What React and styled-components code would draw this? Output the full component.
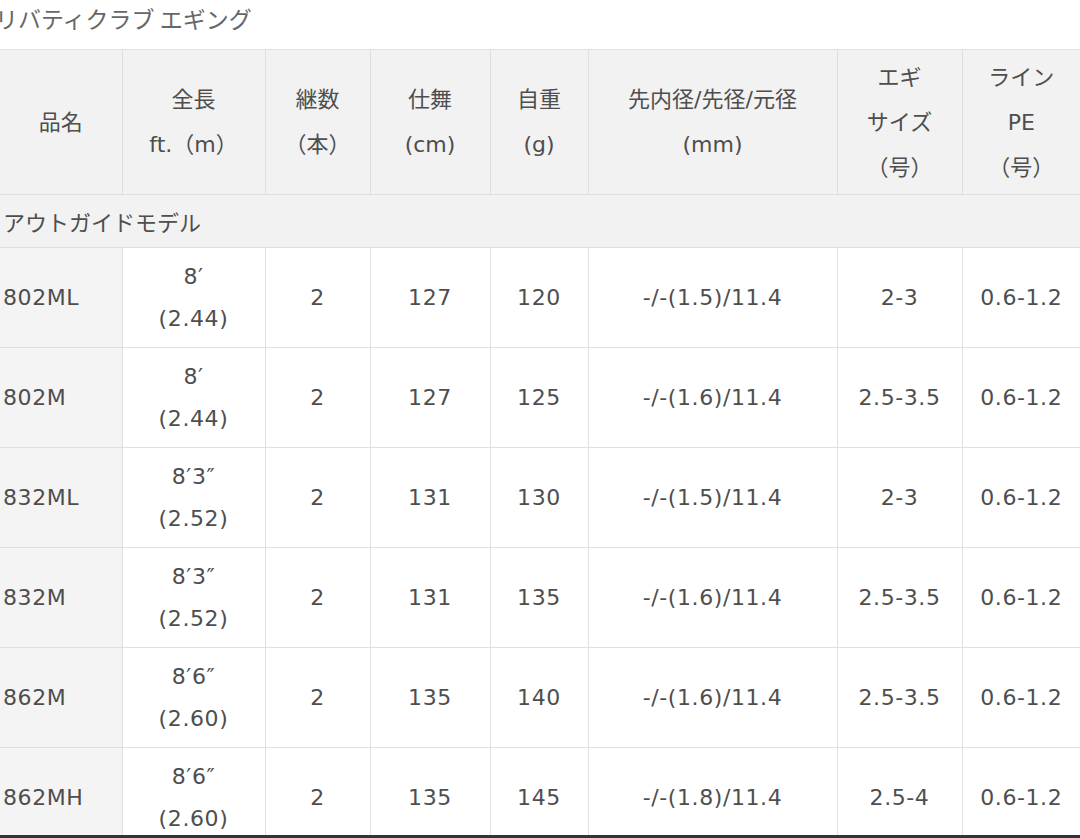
import React from 'react';
import styled, { createGlobalStyle } from 'styled-components';

const GlobalStyle = createGlobalStyle`
  html, body {
    margin: 0;
    padding: 0;
    background: #fff;
  }
  body {
    font-family: "DejaVu Sans", "Noto Sans CJK JP", sans-serif;
    color: #4e4e4e;
  }
`;

const Page = styled.div`
  width: 1080px;
  height: 838px;
  overflow: hidden;
  box-sizing: border-box;
  border-bottom: 3px solid #333;
`;

const Title = styled.h2`
  margin: 0;
  height: 49px;
  line-height: 36px;
  font-size: 23px;
  font-weight: normal;
  color: #666;
  text-indent: -5px;
  font-family: "Noto Sans CJK JP", sans-serif;
  white-space: nowrap;
`;

const Table = styled.table`
  width: 1080px;
  table-layout: fixed;
  border-collapse: collapse;
  font-size: 22px;
  letter-spacing: 0.6px;
`;

const HeadCell = styled.th`
  background: #f2f2f2;
  height: 144px;
  padding: 0;
  font-weight: normal;
  text-align: center;
  vertical-align: middle;
  line-height: 45px;
  letter-spacing: 0;
  border: 1px solid #e0e0e0;
  &:first-child { border-left: none; }
  &:last-child { border-right: none; }
`;

const SectionCell = styled.td`
  background: #f2f2f2;
  height: 52px;
  padding: 0 0 0 3px;
  text-align: left;
  letter-spacing: 0;
  font-family: "Noto Sans CJK JP", sans-serif;
  border: 1px solid #e0e0e0;
  border-left: none;
  border-right: none;
`;

const Cell = styled.td`
  height: 99px;
  padding: 0;
  text-align: ${p => (p.$name ? 'left' : 'center')};
  padding-left: ${p => (p.$name ? '3px' : '0')};
  background: ${p => (p.$name ? '#f4f4f4' : '#fff')};
  line-height: 42px;
  border: 1px solid #e0e0e0;
  &:first-child { border-left: none; }
  &:last-child { border-right: none; }
`;

const widths = [122, 143, 105, 120, 98, 249, 125, 118];

const headers = [
  ['品名'],
  ['全長', 'ft.（m）'],
  ['継数', '（本）'],
  ['仕舞', '(cm)'],
  ['自重', '(g)'],
  ['先内径/先径/元径', '(mm)'],
  ['エギ', 'サイズ', '（号）'],
  ['ライン', 'PE', '（号）'],
];

const rows = [
  ['802ML', '8′', '(2.44)', 2, 127, 120, '-/-(1.5)/11.4', '2-3', '0.6-1.2'],
  ['802M', '8′', '(2.44)', 2, 127, 125, '-/-(1.6)/11.4', '2.5-3.5', '0.6-1.2'],
  ['832ML', '8′3″', '(2.52)', 2, 131, 130, '-/-(1.5)/11.4', '2-3', '0.6-1.2'],
  ['832M', '8′3″', '(2.52)', 2, 131, 135, '-/-(1.6)/11.4', '2.5-3.5', '0.6-1.2'],
  ['862M', '8′6″', '(2.60)', 2, 135, 140, '-/-(1.6)/11.4', '2.5-3.5', '0.6-1.2'],
  ['862MH', '8′6″', '(2.60)', 2, 135, 145, '-/-(1.8)/11.4', '2.5-4', '0.6-1.2'],
];

export default function App() {
  return (
    <Page>
      <GlobalStyle />
      <Title>リバティクラブ エギング</Title>
      <Table>
        <colgroup>
          {widths.map((w, i) => (
            <col key={i} style={{ width: w }} />
          ))}
        </colgroup>
        <thead>
          <tr>
            {headers.map((lines, i) => (
              <HeadCell key={i}>
                {lines.map((l, j) => (
                  <div key={j}>{l}</div>
                ))}
              </HeadCell>
            ))}
          </tr>
        </thead>
        <tbody>
          <tr>
            <SectionCell colSpan={8}>アウトガイドモデル</SectionCell>
          </tr>
          {rows.map(r => (
            <tr key={r[0]}>
              <Cell $name>{r[0]}</Cell>
              <Cell>
                <div>{r[1]}</div>
                <div>{r[2]}</div>
              </Cell>
              <Cell>{r[3]}</Cell>
              <Cell>{r[4]}</Cell>
              <Cell>{r[5]}</Cell>
              <Cell>{r[6]}</Cell>
              <Cell>{r[7]}</Cell>
              <Cell>{r[8]}</Cell>
            </tr>
          ))}
        </tbody>
      </Table>
    </Page>
  );
}
